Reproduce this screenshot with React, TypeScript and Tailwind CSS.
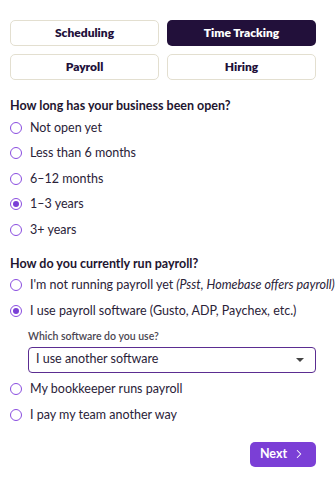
import { ChevronRight } from 'lucide-react';

const tabs = [
  { label: 'Scheduling', active: false },
  { label: 'Time Tracking', active: true },
  { label: 'Payroll', active: false },
  { label: 'Hiring', active: false },
];

function Radio({ checked }: { checked?: boolean }) {
  return (
    <span className="w-[12px] h-[12px] rounded-full border-[1.5px] border-[#8a4de0] flex items-center justify-center shrink-0">
      {checked && <span className="w-[6px] h-[6px] rounded-full bg-[#7b3fd6]" />}
    </span>
  );
}

function Option({ label, checked, extra }: { label: string; checked?: boolean; extra?: string }) {
  return (
    <div className="flex items-center gap-[8px] h-[25.5px]">
      <Radio checked={checked} />
      <span className="text-[12.5px] leading-none text-[#2a2238] whitespace-nowrap">
        {label}
        {extra && <em className="italic"> {extra}</em>}
      </span>
    </div>
  );
}

export default function App() {
  return (
    <div
      className="w-[336px] h-[487px] bg-white pl-[10px] pr-[20px] pt-[20px]"
      style={{ fontFamily: 'Lato, "Liberation Sans", sans-serif' }}
    >
      {/* Product tabs */}
      <div className="grid grid-cols-2 gap-x-[8px] gap-y-[8px]">
        {tabs.map((t) => (
          <button
            key={t.label}
            className={
              t.active
                ? 'h-[26px] rounded-[5px] bg-[#22103a] text-white text-[12px] font-extrabold'
                : 'h-[26px] rounded-[5px] bg-white border-[1.5px] border-[#e3dfd0] text-[#22103a] text-[12px] font-extrabold'
            }
          >
            {t.label}
          </button>
        ))}
      </div>

      {/* Question 1 */}
      <h3 className="mt-[18px] text-[12.5px] leading-[16px] font-bold text-[#1e1530]">
        How long has your business been open?
      </h3>
      <div className="mt-[1px]">
        <Option label="Not open yet" />
        <Option label="Less than 6 months" />
        <Option label="6–12 months" />
        <Option label="1–3 years" checked />
        <Option label="3+ years" />
      </div>

      {/* Question 2 */}
      <h3 className="mt-[13px] text-[12.5px] leading-[16px] font-bold text-[#1e1530]">
        How do you currently run payroll?
      </h3>
      <div className="mt-[1px]">
        <Option label="I'm not running payroll yet" extra="(Psst, Homebase offers payroll)" />
        <Option label="I use payroll software (Gusto, ADP, Paychex, etc.)" checked />
        <div className="pl-[18px] mt-[6px] mb-[4px]">
          <div className="text-[10.5px] leading-[13px] font-semibold text-[#4b4752]">Which software do you use?</div>
          <div className="mt-[4px] h-[26px] rounded-[4px] border-[1.5px] border-[#5b2d91] flex items-center justify-between pl-[7px] pr-[11px]">
            <span className="text-[12.5px] text-[#2a2238]">I use another software</span>
            <span className="w-0 h-0 border-l-[4px] border-r-[4px] border-t-[4px] border-l-transparent border-r-transparent border-t-[#444]" />
          </div>
        </div>
        <Option label="My bookkeeper runs payroll" />
        <Option label="I pay my team another way" />
      </div>

      {/* Footer */}
      <div className="flex justify-end mt-[14px]">
        <button className="h-[25px] w-[66px] rounded-[5px] bg-[#7b3fd6] text-white text-[12.5px] font-bold flex items-center justify-center gap-[5px]">
          Next
          <ChevronRight size={14} strokeWidth={1.75} />
        </button>
      </div>
    </div>
  );
}
